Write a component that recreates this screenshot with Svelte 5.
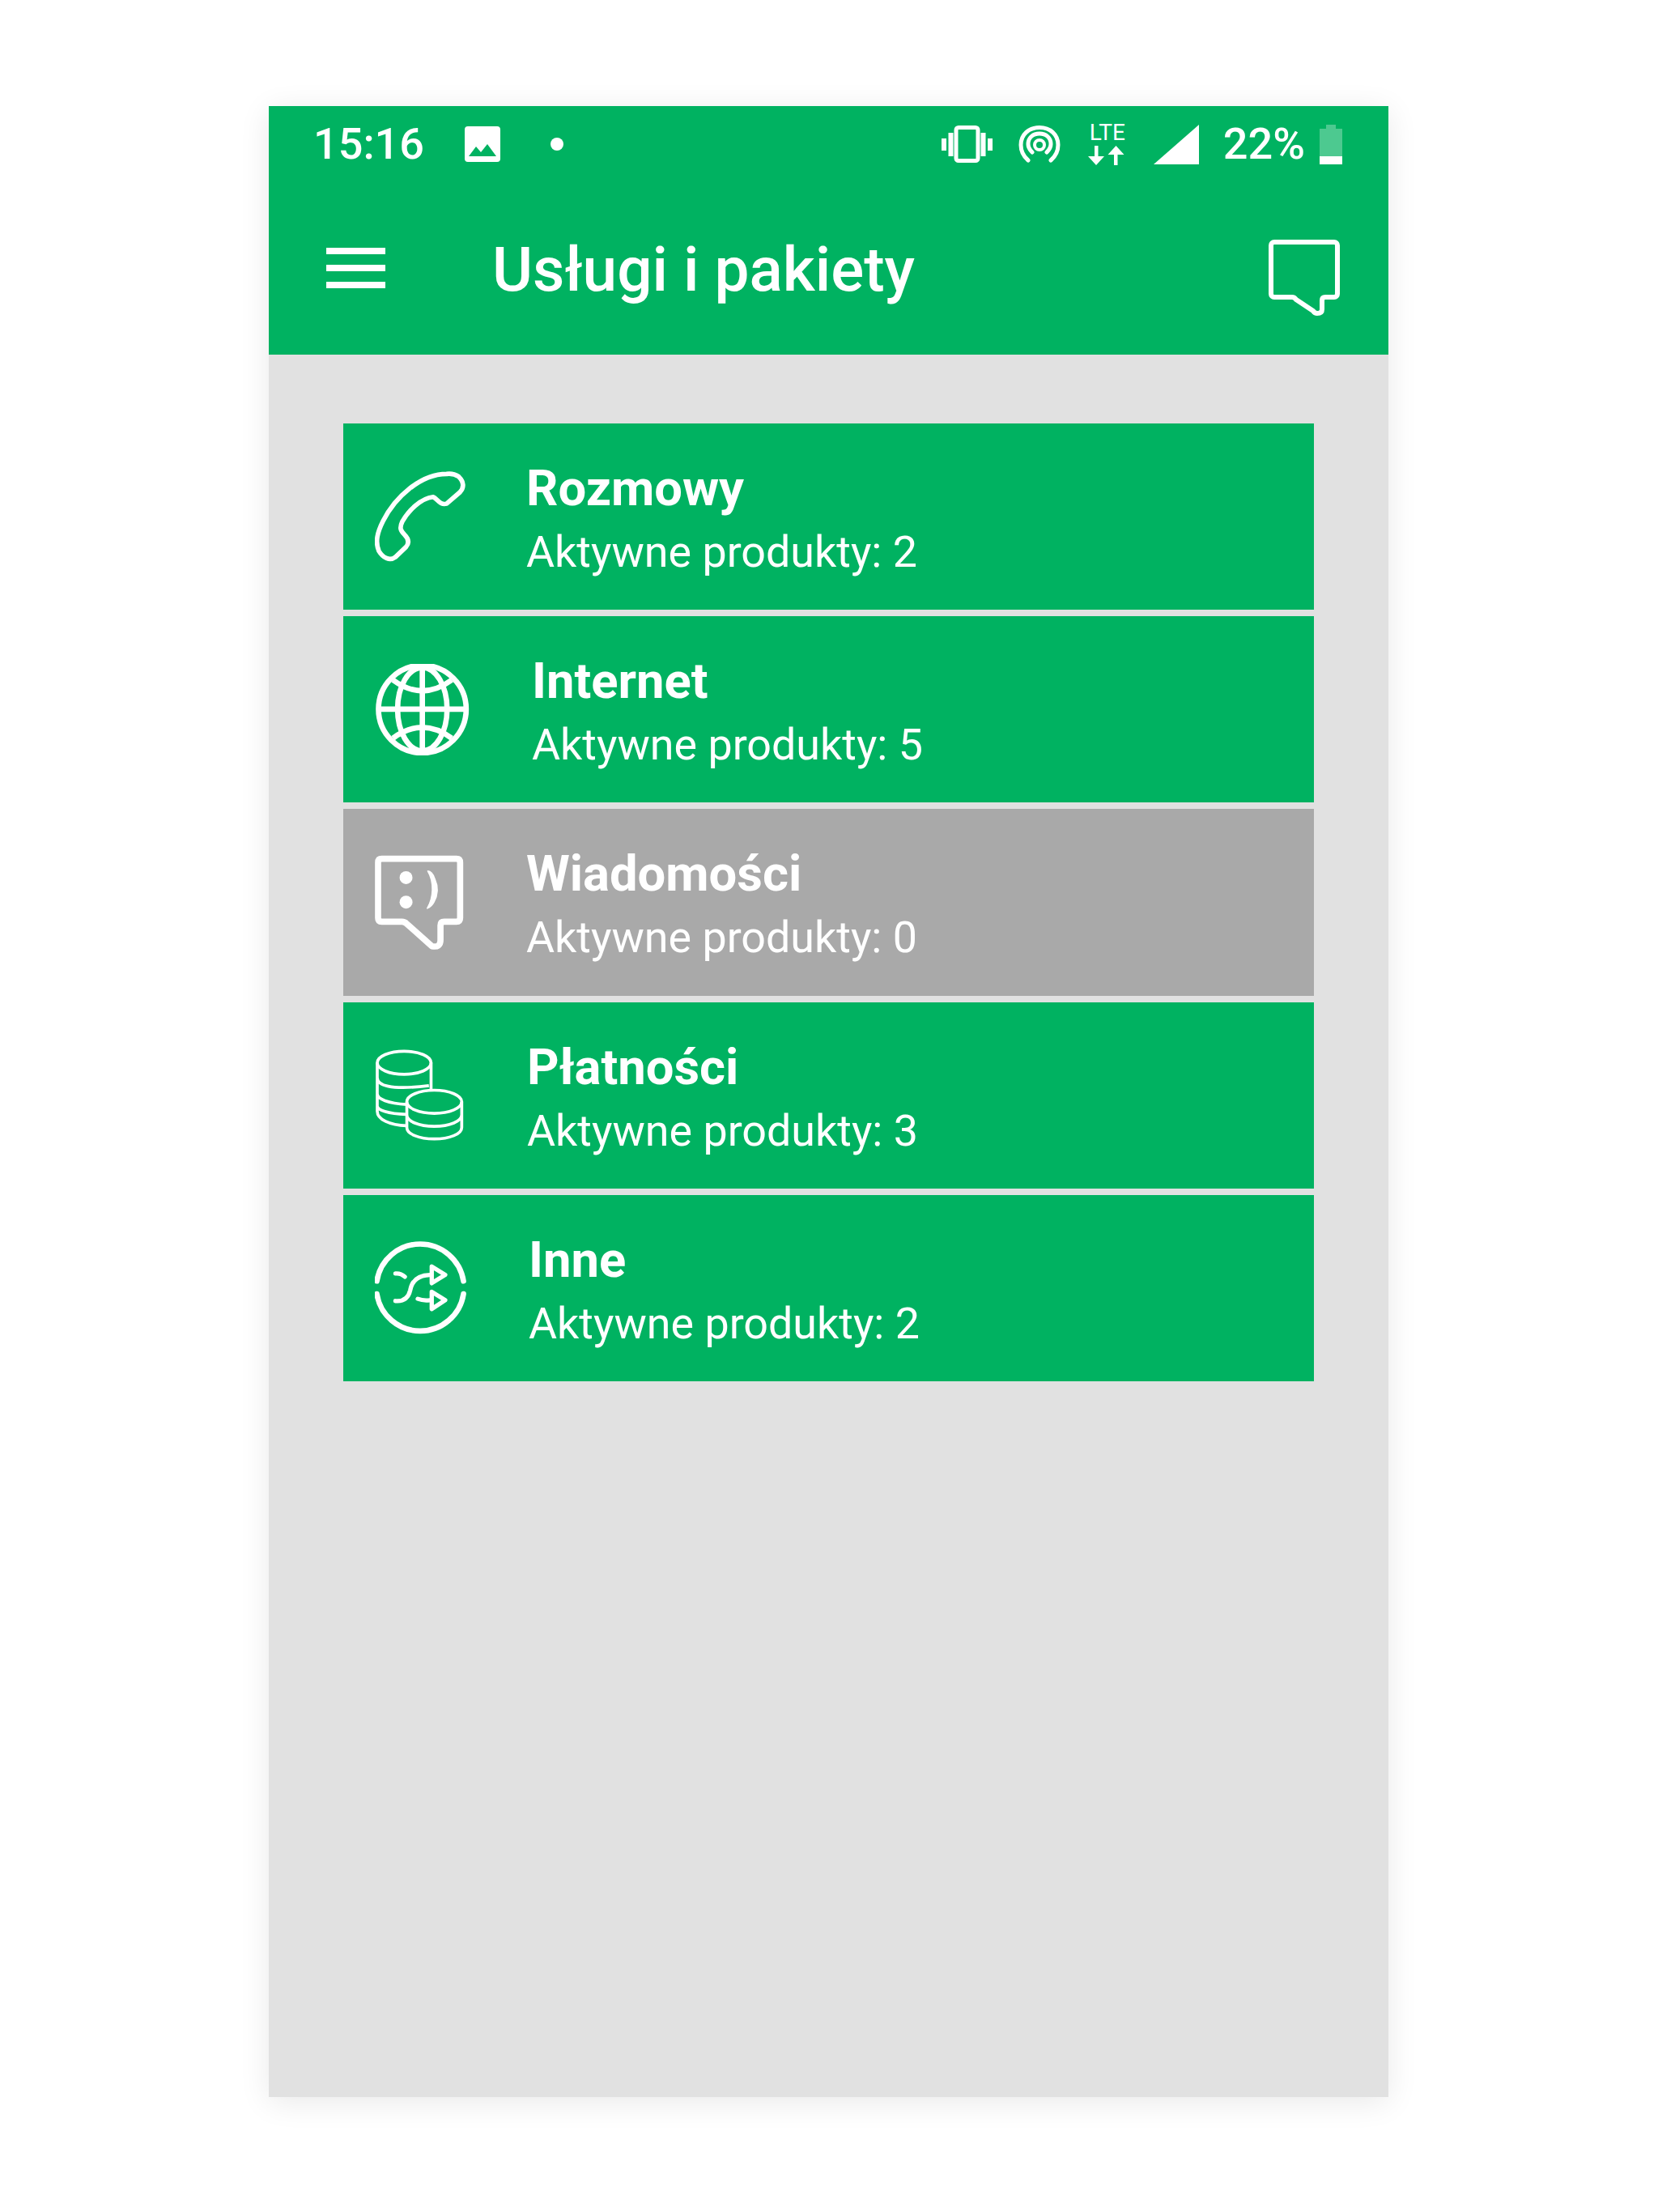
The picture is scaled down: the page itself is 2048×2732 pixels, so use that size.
<script>
  const services = [
    { id: 'phone', title: 'Rozmowy', count: 2 },
    { id: 'globe', title: 'Internet', count: 5 },
    { id: 'sms', title: 'Wiadomości', count: 0 },
    { id: 'coins', title: 'Płatności', count: 3 },
    { id: 'other', title: 'Inne', count: 2 }
  ];
</script>

<div class="page">
  <div class="phone">
    <header class="top">
      <div class="status">
        <span class="time">15:16</span>
        <svg class="ic-image" viewBox="0 0 44 44">
          <path fill="#fff" fill-rule="evenodd" d="M4 0h36a4 4 0 0 1 4 4v36a4 4 0 0 1-4 4H4a4 4 0 0 1-4-4V4a4 4 0 0 1 4-4zM5 37h34L28 22l-8 10-6-7z" />
        </svg>
        <span class="dot"></span>
        <div class="status-right">
          <svg class="ic-vibrate" viewBox="0 0 63 46">
            <rect x="18" y="2.5" width="27" height="41" rx="3" fill="none" stroke="#fff" stroke-width="5" />
            <path fill="#fff" d="M0 16h6v15H0zM8.5 9h6v29h-6zM48.500 9h6v29h-6zM57 16h6v15h-6z" />
          </svg>
          <svg class="ic-hotspot" viewBox="0 0 52 46">
            <g fill="none" stroke="#fff" stroke-width="5" stroke-linecap="round">
              <path d="M12 43C5 37 3 30 3 24 3 11 13 2.500 26 2.500S49 11 49 24c0 6-2 13-9 19" />
              <path d="M17 33c-3-3-5-6-5-10 0-8 6-13 14-13s14 5 14 13c0 4-2 7-5 10" />
            </g>
            <circle cx="26" cy="24" r="6" fill="none" stroke="#fff" stroke-width="4" />
          </svg>
          <div class="lte">
            <span>LTE</span>
            <svg class="ic-arrows" viewBox="0 0 48 24">
              <path fill="#fff" d="M8 0h4.500v13h7.500l-10 11-10-11h8zM36.500 24H32V11h-7.500l10-11 10 11h-8z" />
            </svg>
          </div>
          <svg class="ic-signal" viewBox="0 0 56 49">
            <path fill="#fff" d="M56 0v49H0z" />
          </svg>
          <span class="percent">22%</span>
          <svg class="ic-battery" viewBox="0 0 28 49">
            <path fill="#fff" opacity=".3" d="M8 0h12v5h8v34H0V5h8z" />
            <rect y="39" width="28" height="10" fill="#fff" />
          </svg>
        </div>
      </div>
      <div class="toolbar">
        <div class="burger"><i></i><i></i><i></i></div>
        <h1>Usługi i pakiety</h1>
        <svg class="ic-chat" viewBox="0 0 88 94">
          <path fill="none" stroke="#fff" stroke-width="6" stroke-linejoin="round" d="M7 3h74a4 4 0 0 1 4 4v60a4 4 0 0 1-4 4H70q-4 0-4 4v11q0 5-6 5-3 0-5-3L34 74q-2-3-5-3H7a4 4 0 0 1-4-4V7a4 4 0 0 1 4-4z" />
        </svg>
      </div>
    </header>

    <main class="content">
      {#each services as s}
        <div class="card" class:off={s.count === 0}>
          {#if s.id === 'phone'}
            <svg class="icon i-phone" viewBox="130 185 335 335">
              <path fill="none" stroke="#fff" stroke-width="17" stroke-linejoin="round" d="M395 195C300 195 205 280 160 370 140 410 130 445 145 480 160 505 185 518 205 503L245 465C258 450 255 435 240 420 225 405 220 395 232 370 255 330 300 285 345 280 360 285 370 312 395 305L445 262C460 245 460 225 440 205 425 195 410 193 395 195Z" />
            </svg>
          {:else if s.id === 'globe'}
            <svg class="icon i-globe" viewBox="129 900 360 340">
              <g fill="none" stroke="#fff" stroke-width="20">
                <circle cx="305" cy="1068" r="163" />
                <ellipse cx="305" cy="1068" rx="92" ry="155" />
                <path d="M305 915v306M140 1068h330" />
                <path d="M196 960Q305 1040 414 960M196 1176Q305 1096 414 1176" />
              </g>
            </svg>
          {:else if s.id === 'sms'}
            <svg class="icon i-sms" viewBox="129 165 340 355">
              <path fill="none" stroke="#fff" stroke-width="23" stroke-linejoin="round" d="M155 182h277q14 0 14 14v206q0 14-14 14h-45q-14 0-14 14v55q0 28-32 22L248 424q-8-8-18-8h-75q-14 0-14-14V196q0-14 14-14z" />
              <circle cx="245" cy="252" r="24" fill="#fff" />
              <circle cx="245" cy="343" r="24" fill="#fff" />
              <path fill="#fff" stroke="#fff" stroke-width="5" stroke-linejoin="round" d="M326 228q16 0 26 30 20 44-4 86-8 16-24 22 18-30 19-68 1-40-17-70z" />
            </svg>
          {:else if s.id === 'coins'}
            <svg class="icon i-coins" viewBox="130 165 332 340">
              <g fill="none" stroke="#fff" stroke-width="11">
                <ellipse cx="238" cy="215" rx="100" ry="43" />
                <path d="M138 215v180c0 30 45 52 110 54M338 215v105M138 270c0 28 45 48 192 30M138 330c0 20 40 36 110 40M138 375c0 16 40 30 108 32" />
                <ellipse cx="350" cy="360" rx="102" ry="43" />
                <path d="M248 360v95c0 25 45 43 102 43s102-18 102-43v-95M248 408c0 25 45 43 102 43s102-18 102-43" />
              </g>
            </svg>
          {:else}
            <svg class="icon i-other" viewBox="131 875 354 352">
              <g fill="none" stroke="#fff" stroke-width="20" stroke-linecap="round" stroke-linejoin="round">
                <path d="M138 1026A163 163 0 0 1 460 1026M138 1074A163 163 0 0 0 460 1074" />
                <path d="M207 998q20-2 35 12M207 1100q45 4 55-40 10-55 73-57M290 1092q20 8 45 5" stroke-width="16" />
                <path d="M342 972l50 31-50 31zM342 1066l50 31-50 33z" stroke-width="16" />
              </g>
            </svg>
          {/if}
          <div class="label">
            <strong>{s.title}</strong>
            <span>Aktywne produkty: {s.count}</span>
          </div>
        </div>
      {/each}
    </main>
  </div>
</div>

<style>
  :global(body) {
    margin: 0;
    background: #fff;
    font-family: Roboto, "Liberation Sans", sans-serif;
  }
  .page {
    height: 2732px;
    box-sizing: border-box;
    padding: 131px 333px 142px 332px;
  }
  .phone {
    height: 100%;
    display: flex;
    flex-direction: column;
    background: #e1e1e1;
    box-shadow: 0 6px 36px rgba(0, 0, 0, 0.09);
  }
  .top {
    background: #00b261;
    color: #fff;
  }
  .status {
    height: 92px;
    display: flex;
    align-items: center;
    padding: 2px 57px 0 55px;
    box-sizing: border-box;
  }
  .time {
    font-size: 54px;
    font-weight: 500;
    line-height: 1;
    width: 187px;
  }
  .ic-image { width: 44px; height: 44px; }
  .dot {
    width: 16px;
    height: 16px;
    border-radius: 50%;
    background: #fff;
    margin-left: 62px;
  }
  .status-right {
    margin-left: auto;
    display: flex;
    align-items: center;
  }
  .ic-vibrate { width: 63px; height: 46px; }
  .ic-hotspot { width: 52px; height: 46px; margin-left: 32px; }
  .lte {
    display: flex;
    flex-direction: column;
    align-items: center;
    gap: 5px;
    margin-left: 34px;
    font-size: 28px;
    line-height: 22px;
  }
  .ic-arrows { width: 48px; height: 24px; display: block; }
  .ic-signal { width: 56px; height: 49px; margin-left: 33px; }
  .percent { font-size: 54px; font-weight: 500; line-height: 1; margin-left: 30px; }
  .ic-battery { width: 28px; height: 49px; margin-left: 18px; }
  .toolbar {
    height: 215px;
    display: flex;
    align-items: center;
    padding: 0 60px 0 71px;
  }
  .burger {
    width: 73px;
    display: flex;
    flex-direction: column;
    gap: 13px;
  }
  .burger i {
    height: 8px;
    background: #fff;
  }
  h1 {
    margin: 6px 0 0 132px;
    font-size: 76.500px;
    font-weight: 500;
    line-height: 1;
  }
  .ic-chat {
    width: 88px;
    height: 94px;
    margin-left: auto;
    margin-top: 24px;
  }
  .content {
    padding: 85px 92px 0;
    display: flex;
    flex-direction: column;
    gap: 8px;
  }
  .card {
    height: 230.2px;
    display: flex;
    align-items: center;
    gap: 72px;
    padding-left: 39px;
    background: #00b261;
    color: #fff;
  }
  .card.off { background: #a9a9a9; }
  .icon { flex: none; }
  .i-phone { width: 112px; height: 112px; margin-right: 3px; }
  .i-globe { width: 120px; height: 113px; margin-right: 2px; }
  .i-sms { width: 113px; height: 118px; margin-right: 2px; }
  .i-coins { width: 111px; height: 113px; margin-right: 5px; }
  .i-other { width: 118px; height: 117px; }
  .label {
    display: flex;
    flex-direction: column;
    gap: 15px;
    margin-top: 7px;
  }
  .label strong {
    font-size: 61.500px;
    font-weight: 700;
    line-height: 66px;
  }
  .label span {
    font-size: 53.800px;
    line-height: 62px;
  }
</style>
